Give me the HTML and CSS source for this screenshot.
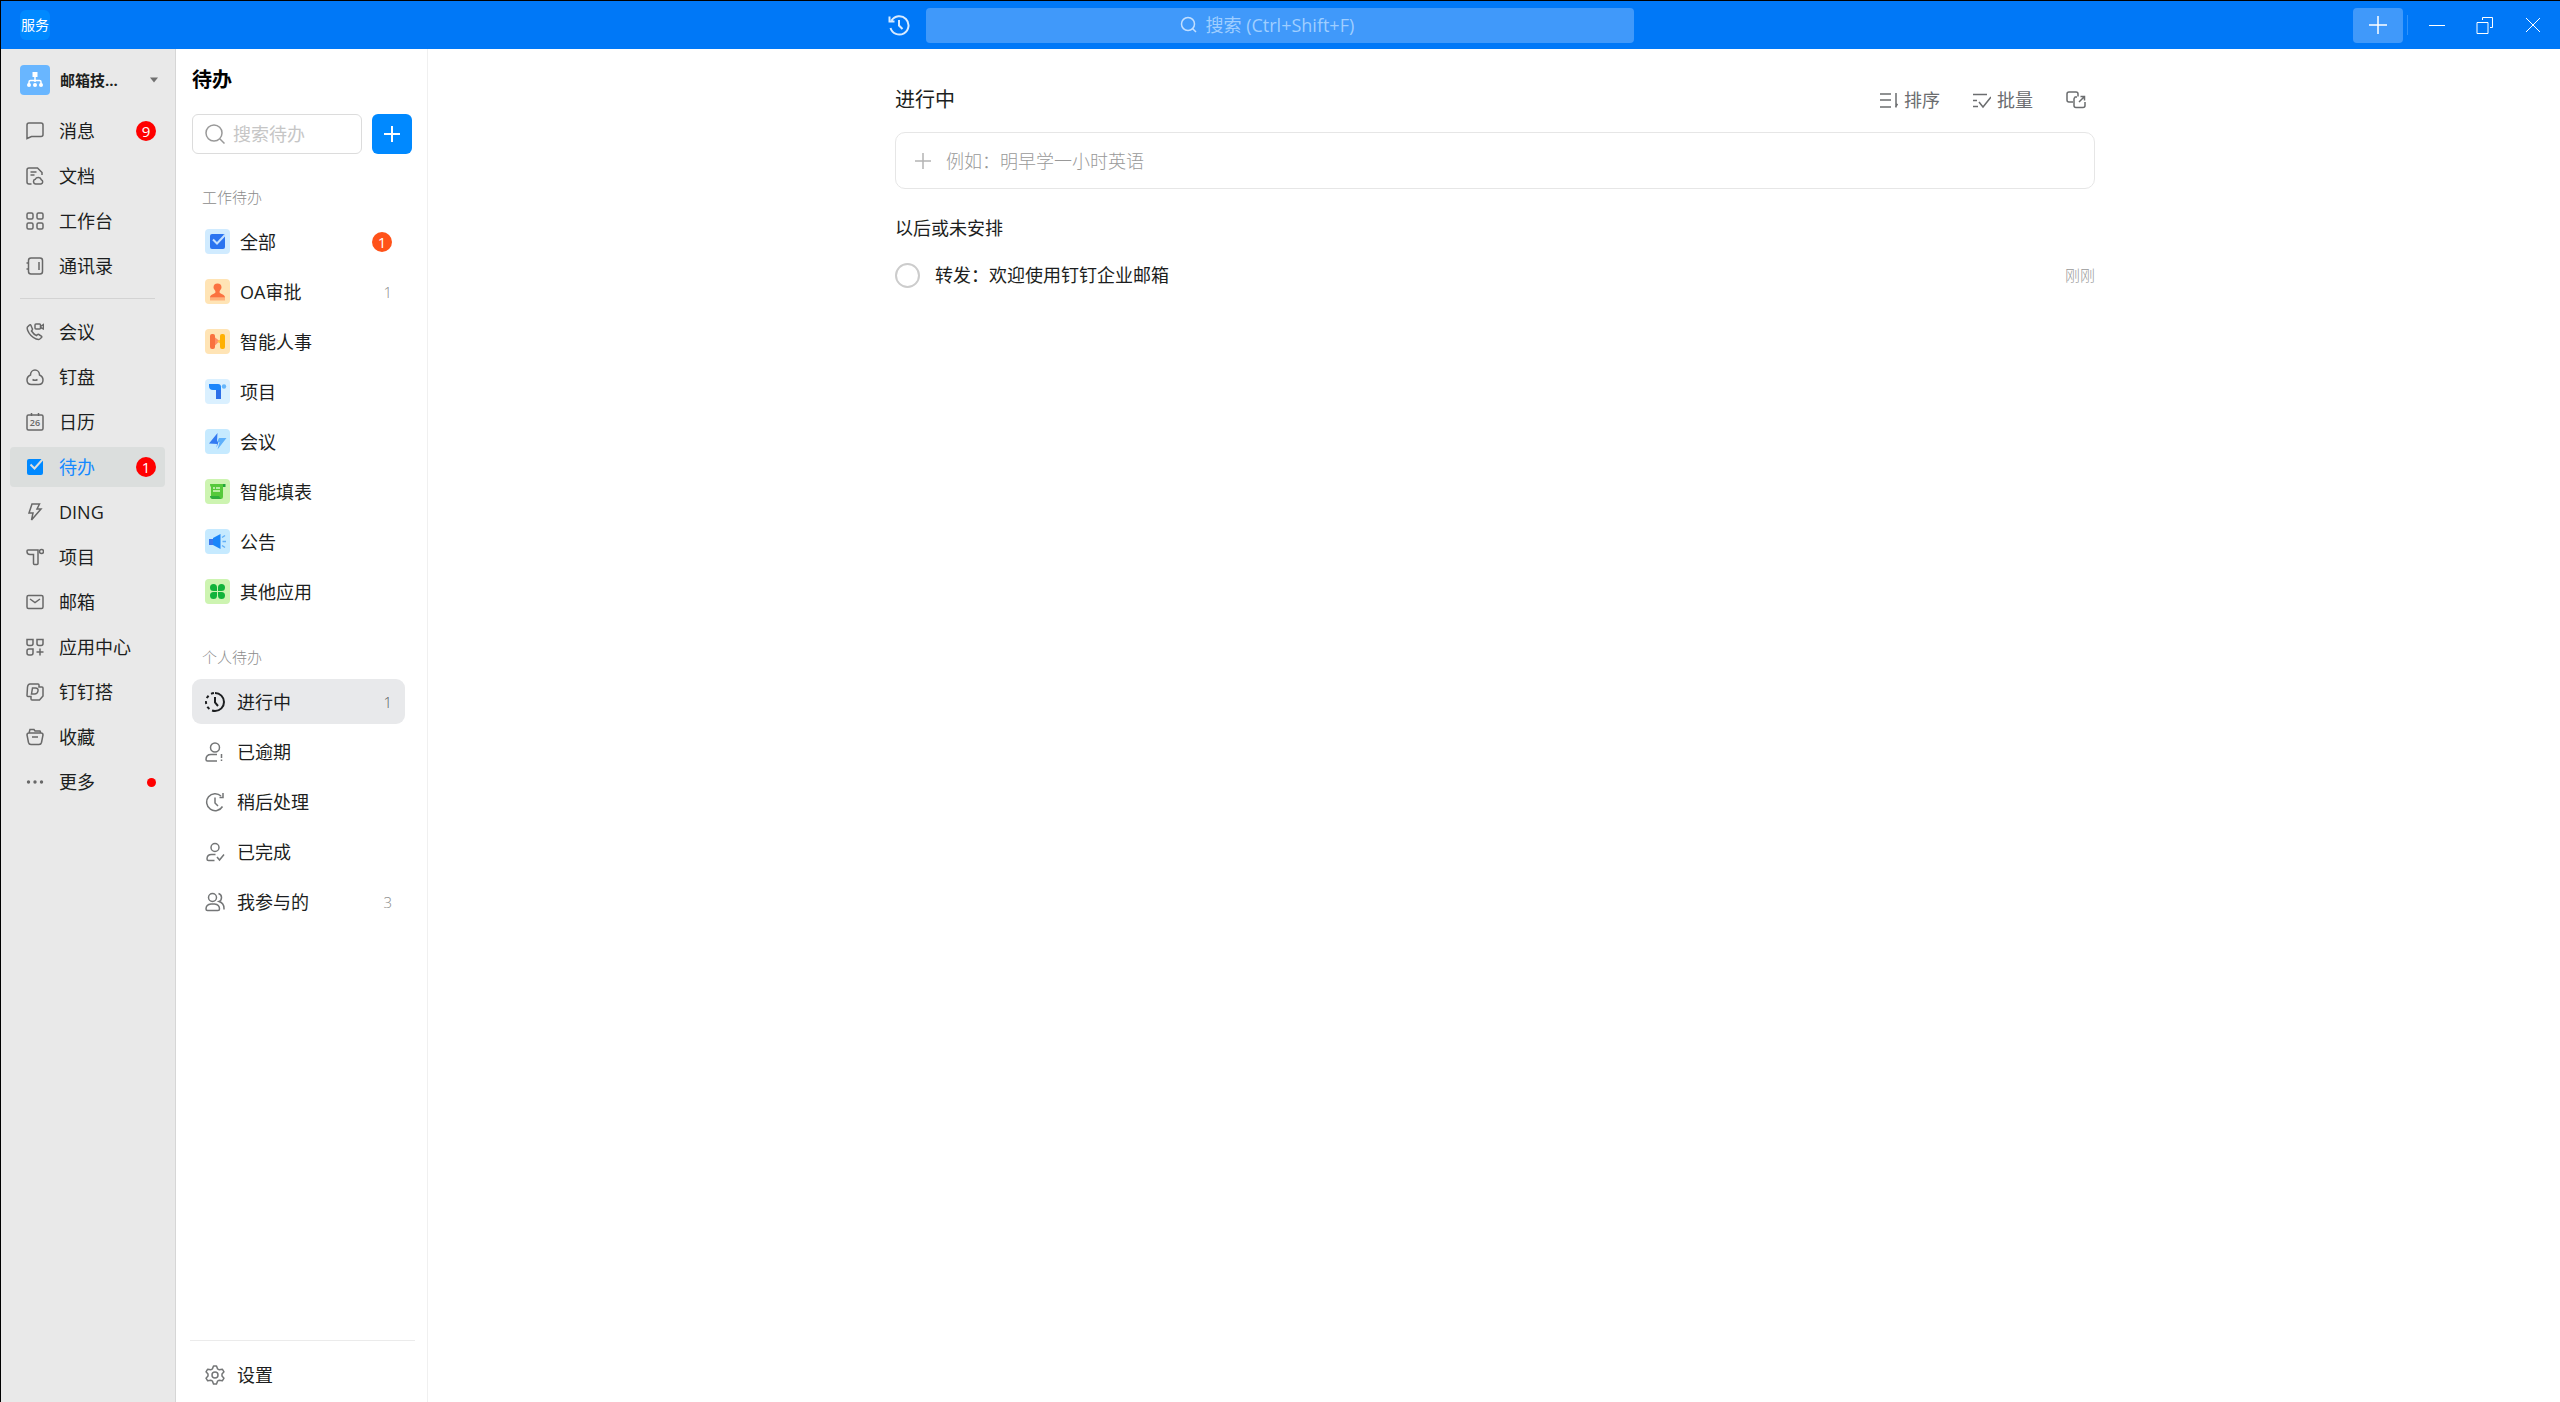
FILE: index.html
```html
<!DOCTYPE html>
<html lang="zh-CN">
<head>
<meta charset="utf-8">
<title>待办</title>
<link rel="stylesheet" href="styles.css">
</head>
<body>
<div class="app">
  <header class="topbar">
    <div class="topbar-side"><span class="user">服务</span></div>
    <div class="topbar-center">
      <button class="icon-button history" aria-label="历史">
        <svg class="icon-22" viewBox="0 0 22 22"><path d="M3.500 6.500A9.200 9.200 0 1 1 2.500 14M1.500 2.500v5h5M11 6v5.500l3.500 3.500"/></svg>
      </button>
      <label class="global-search">
        <svg class="icon-18" viewBox="0 0 18 18"><circle cx="8" cy="8" r="6.500"/><path d="M12.500 12.500L16 16"/></svg>
        <input type="search" aria-label="搜索" placeholder="搜索 (Ctrl+Shift+F)">
      </label>
    </div>
    <div class="topbar-side window-tools">
      <button class="create" aria-label="新建"><svg class="icon-18" viewBox="0 0 18 18"><path d="M0 9h18M9 0v18"/></svg></button>
      <span class="split"></span>
      <button class="icon-button" aria-label="最小化"><svg class="icon-18" viewBox="0 0 18 18"><path d="M1 9.500h16"/></svg></button>
      <button class="icon-button" aria-label="还原"><svg class="icon-18" viewBox="0 0 18 18"><path d="M1 6.500h11v11H1zM6.500 4V1.500h10v10H14"/></svg></button>
      <button class="icon-button" aria-label="关闭"><svg class="icon-18" viewBox="0 0 18 18"><path d="M2 2l14 14M16 2L2 16"/></svg></button>
    </div>
  </header>

  <div class="body">
    <nav class="sidebar" aria-label="主导航">
      <button class="org">
        <span class="org-logo"><svg class="icon-18" viewBox="0 0 18 18"><path class="solid" d="M6.500 1h5v5h-5z"/><path d="M9 6v5M3 13.500V11q0-1.500 1.500-1.500h9Q15 9.500 15 11v2.500"/><circle class="solid" cx="3" cy="14" r="2"/><circle class="solid" cx="9" cy="14" r="2"/><circle class="solid" cx="15" cy="14" r="2"/></svg></span>
        <span class="org-name">邮箱技...</span>
        <svg class="caret" viewBox="0 0 10 6"><path d="M0 0h10L5 6z"/></svg>
      </button>
      <ul class="nav-list">
        <li><a class="nav-item" href="#"><svg class="icon-18" viewBox="0 0 18 18"><path d="M1 16.500V3a2 2 0 0 1 2-2h12a2 2 0 0 1 2 2v9.500a2 2 0 0 1-2 2H5.500z"/></svg><span>消息</span><b class="badge">9</b></a></li>
        <li><a class="nav-item" href="#"><svg class="icon-18" viewBox="0 0 18 18"><path d="M5.500 17H3a2 2 0 0 1-2-2V3a2 2 0 0 1 2-2h8.500L16 5.500V8M4.500 5h6M4.500 8h4M9.500 17H15a2.200 2.200 0 0 0 .3-4.200 3.200 3.200 0 0 0-6-.5A2.400 2.400 0 0 0 9.500 17z"/></svg><span>文档</span></a></li>
        <li><a class="nav-item" href="#"><svg class="icon-18" viewBox="0 0 18 18"><rect x="1" y="1" width="6" height="6" rx="1.500"/><rect x="11" y="1" width="6" height="6" rx="1.500"/><rect x="1" y="11" width="6" height="6" rx="1.500"/><rect x="11" y="11" width="6" height="6" rx="1.500"/></svg><span>工作台</span></a></li>
        <li><a class="nav-item" href="#"><svg class="icon-18" viewBox="0 0 18 18"><rect x="2.500" y="1" width="14" height="16" rx="2.500"/><path d="M13 5v8M.5 6h2M.5 12h2"/></svg><span>通讯录</span></a></li>
      </ul>
      <ul class="nav-list nav-more">
        <li><a class="nav-item" href="#"><svg class="icon-18" viewBox="0 0 18 18"><path d="M3.500 2L1.500 4c-.8 1 0 5 3.500 8.500S12.500 17 13.800 16l1.700-1.500c.5-.5.3-1-.2-1.400l-2.500-1.600c-.6-.3-1-.2-1.500.3l-.8.8C8.500 12 6.500 9.500 5.500 8l.7-1c.4-.5.4-.9 0-1.500L4.900 2.300C4.500 1.600 4 1.500 3.500 2z"/><rect x="9" y="1" width="5.500" height="5" rx="1"/><path d="M14.500 3.500l3-2v4.500l-3-1.500"/></svg><span>会议</span></a></li>
        <li><a class="nav-item" href="#"><svg class="icon-18" viewBox="0 0 18 18"><path d="M4.500 7a4.500 5 0 0 1 9 0C16 8 17 10 17 12c0 3-2 4.500-4.500 4.500h-7C3 16.500 1 15 1 12c0-2 1-4 3.500-5zM6.500 11.500q2.500 1.500 5 0"/></svg><span>钉盘</span></a></li>
        <li><a class="nav-item" href="#"><svg class="icon-18 calendar" viewBox="0 0 18 18"><rect x="1" y="2" width="16" height="15" rx="1.500"/><path d="M5.500 0v3M12.500 0v3"/><text x="9" y="13">26</text></svg><span>日历</span></a></li>
        <li><a class="nav-item current" href="#" aria-current="page"><svg class="icon-18" viewBox="0 0 18 18"><rect class="solid" x="1" y="1" width="16" height="16" rx="2"/><path class="knock" d="M4.500 6.500l4 4L17 1"/></svg><span>待办</span><b class="badge">1</b></a></li>
        <li><a class="nav-item" href="#"><svg class="icon-18" viewBox="0 0 18 18"><path d="M6 1h7.500L11 6h4L5.500 17 7 10H3z"/></svg><span>DING</span></a></li>
        <li><a class="nav-item" href="#"><svg class="icon-18" viewBox="0 0 18 18"><path d="M2 2h10v13.500q0 1-1 1H8.500q-1 0-1-1V6.500H4Q1 6.500 1 3.500V3q0-1 1-1z"/><circle cx="15.500" cy="3.500" r="2"/></svg><span>项目</span></a></li>
        <li><a class="nav-item" href="#"><svg class="icon-18" viewBox="0 0 18 18"><rect x="1" y="2.500" width="16" height="13" rx="1.500"/><path d="M4 6l5 3.500L14 6"/></svg><span>邮箱</span></a></li>
        <li><a class="nav-item" href="#"><svg class="icon-18" viewBox="0 0 18 18"><path d="M1 1.500h6v4q0 2-2 2H3q-2 0-2-2zM11 1.500h6v4q0 2-2 2h-2q-2 0-2-2zM1 13q0-2 2-2h4v4q0 2-2 2H3q-2 0-2-2zM14 10.500v7M10.500 14h7"/></svg><span>应用中心</span></a></li>
        <li><a class="nav-item" href="#"><svg class="icon-18" viewBox="0 0 18 18"><path d="M4 1h8q1 0 1 1v2h3q1 0 1 1v8l-3.500 4H6q-1 0-1-1v-2.500H2q-1 0-1-1L1.500 4Q2 1 4 1zM5.500 11L6.500 5h3q3 0 2.500 3t-3.500 3z"/></svg><span>钉钉搭</span></a></li>
        <li><a class="nav-item" href="#"><svg class="icon-18" viewBox="0 0 18 18"><path d="M3 5L4 1.500h4l1 1.500h5l1 2M3 5h12q2 0 2 2l-1.500 7.500q-.5 2-2.500 2H5q-2 0-2.500-2L1 7q0-2 2-2zM6 9h6"/></svg><span>收藏</span></a></li>
        <li><a class="nav-item" href="#"><svg class="icon-18" viewBox="0 0 18 18"><circle class="solid" cx="2.500" cy="9" r="1.700"/><circle class="solid" cx="9" cy="9" r="1.700"/><circle class="solid" cx="15.500" cy="9" r="1.700"/></svg><span>更多</span><i class="dot"></i></a></li>
      </ul>
    </nav>

    <aside class="panel">
      <h1 class="panel-title">待办</h1>
      <div class="panel-tools">
        <label class="panel-search">
          <svg class="icon-20" viewBox="0 0 20 20"><circle cx="9" cy="9" r="8"/><path d="M15 15l4.500 4.500"/></svg>
          <input type="search" aria-label="搜索待办" placeholder="搜索待办">
        </label>
        <button class="add" aria-label="新建待办"><svg class="icon-18" viewBox="0 0 18 18"><path d="M1 9h16M9 1v16"/></svg></button>
      </div>

      <h2 class="group-title">工作待办</h2>
      <ul class="list work">
        <li><a class="row" href="#"><svg class="app-icon" viewBox="0 0 25 25"><rect width="25" height="25" rx="4" fill="#d0ebff"/><rect x="5" y="5" width="15" height="15" rx="2" fill="#2b74f0"/><path d="M8 10.500l4 4 8-8.500" fill="none" stroke="#c3e1ff" stroke-width="2"/></svg><span>全部</span><b class="badge orange">1</b></a></li>
        <li><a class="row" href="#"><svg class="app-icon" viewBox="0 0 25 25"><rect width="25" height="25" rx="4" fill="#ffe4b5"/><path d="M5 18.500h15v3H5z" fill="#ffb27a"/><path d="M8.500 8.500a4 4 0 1 1 8 0c0 2-2 2.500-2 4.500 0 2 5.500 2 5.500 5.500H5C5 15 10.500 15 10.500 13c0-2-2-2.500-2-4.500z" fill="#fb7240"/></svg><span>OA审批</span><em class="count">1</em></a></li>
        <li><a class="row" href="#"><svg class="app-icon" viewBox="0 0 25 25"><rect width="25" height="25" rx="4" fill="#ffe4b5"/><path d="M9.500 8l5 4-5 5z" fill="#ff8f66"/><rect x="5" y="5" width="5" height="15" rx="2" fill="#f9713e"/><path d="M12 12.500l4-2.500v5z" fill="#ffc14a"/><rect x="15" y="5" width="5" height="15" rx="2" fill="#ffb001"/></svg><span>智能人事</span></a></li>
        <li><a class="row" href="#"><svg class="app-icon" viewBox="0 0 25 25"><rect width="25" height="25" rx="4" fill="#daf0ff"/><path d="M4 5h9q3 0 3 3v12h-5v-9H8Q4 11 4 7z" fill="#1b86fb"/><path d="M11 11h5v9h-5z" fill="#2e6fe8"/><circle cx="19" cy="7.500" r="2.200" fill="#66b6fb"/></svg><span>项目</span></a></li>
        <li><a class="row" href="#"><svg class="app-icon" viewBox="0 0 25 25"><rect width="25" height="25" rx="4" fill="#c6eaff"/><path d="M12.500 4l-.5 8 1.500 1-2 5.500.5-3.500-8-.5z" fill="#347bf2"/><path d="M14 9h7.500L12.500 20.500l2-7.500H12z" fill="#5eb0fb"/></svg><span>会议</span></a></li>
        <li><a class="row" href="#"><svg class="app-icon" viewBox="0 0 25 25"><rect width="25" height="25" rx="4" fill="#cdf4b1"/><path d="M5 5h13v13q0 2-2 2H8q-2 0-2-3V8Q5 8 5 5z" fill="#56c93b"/><path d="M5 17h9l2 3H8q-3 0-3-3z" fill="#2fae3c"/><path d="M18 5h2.500v3H18z" fill="#23a83b"/><path d="M8 9h2M11 9h4M8 12h7" stroke="#d8f7c4"/></svg><span>智能填表</span></a></li>
        <li><a class="row" href="#"><svg class="app-icon" viewBox="0 0 25 25"><rect width="25" height="25" rx="4" fill="#c6eaff"/><path d="M4 10h4v6H4z" fill="#3b78ee"/><path d="M8 9l7.500-4v15L8 16z" fill="#1a86fa"/><path d="M17 8.500l3-2M17.500 12.500H21M17 16.500l3 2" stroke="#62b0f8" stroke-width="1.500"/></svg><span>公告</span></a></li>
        <li><a class="row" href="#"><svg class="app-icon" viewBox="0 0 25 25"><rect width="25" height="25" rx="4" fill="#cdf4b1"/><g fill="#12b33b"><path d="M12 12H8.500A3.500 3.500 0 1 1 12 8.500zM13 12V8.500a3.500 3.500 0 1 1 3.500 3.500zM12 13v3.500A3.500 3.500 0 1 1 8.500 13zM13 13h3.500a3.500 3.500 0 1 1-3.500 3.500z"/></g></svg><span>其他应用</span></a></li>
      </ul>

      <h2 class="group-title">个人待办</h2>
      <ul class="list personal">
        <li><a class="row current" href="#" aria-current="true"><svg class="icon-20" viewBox="0 0 20 20"><path d="M10 1a9 9 0 0 1 0 18"/><path stroke-dasharray="3 3" d="M10 19a9 9 0 0 1 0-18"/><path d="M10 5v5.500l3 3.500"/></svg><span>进行中</span><em class="count">1</em></a></li>
        <li><a class="row" href="#"><svg class="icon-20" viewBox="0 0 20 20"><circle cx="10" cy="5.500" r="4.500"/><path d="M12 19H2.500q-1.500 0-1.500-1.500c0-3 2-5 5-5h6M16.500 12v4M16.500 17.500V19"/></svg><span>已逾期</span></a></li>
        <li><a class="row" href="#"><svg class="icon-20" viewBox="0 0 20 20"><path d="M17.500 14.500A8.500 8.500 0 1 1 16 4M18 1v4.500h-3.500M10 5.500v5.500l3 3"/></svg><span>稍后处理</span></a></li>
        <li><a class="row" href="#"><svg class="icon-20" viewBox="0 0 20 20"><circle cx="10" cy="5.500" r="4"/><path d="M9.500 18.500H3.500Q2 18.500 2 17c0-3 2-4.500 4.500-4.500h4M12 15l2.500 3 4.500-5.500"/></svg><span>已完成</span></a></li>
        <li><a class="row" href="#"><svg class="icon-20" viewBox="0 0 20 20"><circle cx="7.500" cy="5.500" r="4"/><path d="M6 12h3.500q5 .5 5 5 0 1.500-1.500 1.500H2.500Q1 18.500 1 17q0-4.500 5-5zM13.500 1.500q3 1 3 4t-2.500 4q5 1.500 5 7v1"/></svg><span>我参与的</span><em class="count">3</em></a></li>
      </ul>

      <div class="panel-foot">
        <a class="row" href="#"><svg class="icon-20" viewBox="0 0 20 20"><path stroke-linejoin="round" d="M8.500 1h3l1 2.800 1.800 1 3-.6 1.700 2.600-2 2.200v2l2 2.200-1.700 2.600-3-.6-1.800 1-1 2.800h-3l-1-2.800-1.800-1-3 .6L1 13.200 3 11V9L1 6.800l1.700-2.600 3 .6 1.800-1z"/><circle cx="10" cy="10" r="3"/></svg><span>设置</span></a>
      </div>
    </aside>

    <main class="main">
      <div class="content">
        <div class="content-head">
          <h2 class="content-title">进行中</h2>
          <div class="actions">
            <button class="action"><svg class="icon-18" viewBox="0 0 18 18"><path d="M0 3h11M0 9h11M0 16h11M16 2v14.500M15.500 16l2-3"/></svg>排序</button>
            <button class="action"><svg class="icon-18" viewBox="0 0 18 18"><path d="M0 3.500h14M0 9.500h4M0 15.500h5M6 11l4 5 8-10"/></svg>批量</button>
            <button class="action" aria-label="独立窗口"><svg class="icon-20" viewBox="0 0 20 20"><path d="M7 12H3q-2 0-2-2V4q0-2 2-2h7q2 0 2 2v2.500M8.500 7H11M9 7.500q-1 .5-1 1.500v6.500q0 2 2 2h7q2 0 2-2V12M13 12l5.500-5.500M14.500 6.500h4v4"/></svg></button>
          </div>
        </div>
        <label class="new-task">
          <svg class="icon-18" viewBox="0 0 18 18"><path d="M1 9h16M9 1v16"/></svg>
          <input type="text" aria-label="新建待办" placeholder="例如：明早学一小时英语">
        </label>
        <h3 class="section-title">以后或未安排</h3>
        <ul class="tasks">
          <li class="task"><input type="checkbox" id="task-1"><label for="task-1">转发：欢迎使用钉钉企业邮箱</label><time>刚刚</time></li>
        </ul>
      </div>
    </main>
  </div>
</div>
</body>
</html>
```
FILE: styles.css
```css
* { box-sizing: border-box; }
body {
  margin: 0;
  font: 400 18px/24px "Open Sans", "Noto Sans CJK SC", sans-serif;
  color: #1c1e20;
  background: #fff;
}
ul { list-style: none; margin: 0; padding: 0; }
a { color: inherit; text-decoration: none; }
h1, h2, h3 { margin: 0; font-weight: 400; }
em, i { font-style: normal; }
button, input { font: inherit; color: inherit; margin: 0; padding: 0; border: 0; background: none; }
input { outline: 0; min-width: 0; }
input[type="search"] { appearance: none; }
svg { flex: none; display: block; fill: none; stroke: currentColor; stroke-width: 1.5; }
.solid { fill: currentColor; stroke: none; }
.icon-18 { width: 18px; height: 18px; }
.icon-20 { width: 20px; height: 20px; }
.icon-22 { width: 22px; height: 22px; }

.app {
  display: flex;
  flex-direction: column;
  min-height: 100vh;
  border-top: 1px solid #000;
  border-left: 1px solid #000;
}

/* Title bar */
.topbar {
  display: grid;
  grid-template-columns: 1fr auto 1fr;
  align-items: center;
  height: 48px;
  color: #fff;
  background: #0078f7;
}
.topbar-side { padding-left: 19px; }
.user {
  display: block;
  width: 30px;
  border-radius: 6px;
  background: #0089ff;
  font-size: 14px;
  line-height: 30px;
  text-align: center;
  white-space: nowrap;
}
.topbar-center { display: flex; align-items: center; gap: 16px; margin-left: -40px; }
.history { color: #d8ebff; }
.history svg { stroke-width: 2; }
.global-search {
  display: flex;
  align-items: center;
  justify-content: center;
  gap: 8px;
  width: 708px;
  height: 35px;
  border-radius: 4px;
  background: #4099fa;
  color: #c2dfff;
}
.global-search input { width: 174px; }
.global-search input::placeholder { color: #9fceff; opacity: 1; }
.icon-button { display: flex; }
.window-tools {
  display: flex;
  align-items: center;
  justify-content: flex-end;
  gap: 30px;
  padding-right: 18px;
}
.create {
  display: grid;
  place-items: center;
  width: 50px;
  height: 35px;
  margin-right: -26px;
  border-radius: 4px;
  background: #4099fa;
}
.split { width: 1px; height: 20px; margin-right: -10px; background: #2e92fb; }
.window-tools .icon-button svg { stroke-width: 1; }

.body { display: flex; flex: 1; }

/* Main navigation */
.sidebar {
  flex: none;
  width: 175px;
  padding: 16px 10px 16px 9px;
  border-right: 1px solid #d6d6d6;
  background: #e9e9e9;
}
.org {
  display: flex;
  align-items: center;
  width: 100%;
  padding: 0 7px 0 10px;
  margin-bottom: 16px;
}
.org-logo {
  display: grid;
  place-items: center;
  width: 30px;
  height: 30px;
  margin-right: 10px;
  border-radius: 4px;
  background: #69b6ff;
  color: #fff;
}
.org-name { font-size: 15px; font-weight: 700; line-height: 30px; }
.caret { width: 8px; height: 6px; margin-left: auto; fill: #707070; stroke: none; }
.nav-list { display: grid; gap: 5px; }
.nav-more { position: relative; margin-top: 26px; }
.nav-more::before {
  content: "";
  position: absolute;
  top: -14px;
  left: 10px;
  right: 10px;
  border-top: 1px solid #d3d3d3;
}
.nav-item {
  display: flex;
  align-items: center;
  height: 40px;
  padding: 0 9px 0 16px;
  gap: 15px;
  border-radius: 4px;
}
.nav-item svg { color: #686868; }
.nav-item.current { background: #dbdedd; color: #1689ff; }
.nav-item.current svg { color: #0089ff; }
.knock { stroke: #dbdedd; stroke-width: 2; }
.calendar text { font: 600 9px "Open Sans", sans-serif; text-anchor: middle; fill: currentColor; stroke: none; }
.badge {
  width: 20px;
  height: 20px;
  margin-left: auto;
  border-radius: 10px;
  background: #f00;
  color: #fff;
  font-size: 15px;
  font-weight: 400;
  line-height: 20px;
  text-align: center;
}
.badge.orange { background: #ff5219; }
.dot { width: 9px; height: 9px; margin-left: auto; border-radius: 5px; background: #f00; }

/* To-do panel */
.panel {
  display: flex;
  flex-direction: column;
  flex: none;
  width: 252px;
  padding: 16px 0 0 16px;
  border-right: 1px solid #f0f0f0;
}
.panel-title { margin-bottom: 19px; font-size: 20px; font-weight: 700; line-height: 30px; color: #000; }
.panel-tools { display: flex; gap: 10px; margin-bottom: 31px; padding-right: 15px; }
.panel-search {
  display: flex;
  align-items: center;
  flex: 1;
  gap: 8px;
  height: 40px;
  padding: 0 12px;
  border: 1px solid #dcdcdc;
  border-radius: 6px;
  color: #999;
}
.panel-search input { flex: 1; width: 100%; }
.panel-search input::placeholder { color: #c6c6c6; opacity: 1; }
.add {
  display: grid;
  place-items: center;
  width: 40px;
  border-radius: 6px;
  background: #0089ff;
  color: #fff;
}
.add svg { stroke-width: 2; }
.group-title { padding: 0 10px; margin-bottom: 10px; font-size: 15px; font-weight: 300; color: #8c8c8c; }
.list { display: grid; gap: 5px; padding-right: 22px; }
.work { margin-bottom: 31px; }
.row {
  display: flex;
  align-items: center;
  height: 45px;
  padding: 0 13px;
  gap: 12px;
  border-radius: 9px;
}
.row .icon-20 { color: #747677; }
.work .row { gap: 10px; }
.app-icon { width: 25px; height: 25px; stroke: none; }
.row.current { background: #e8e9eb; }
.row.current .icon-20 { color: #1c1e20; stroke-width: 2; }
.row.current .count { color: #5a5d60; }
.count { margin-left: auto; font-size: 15px; font-weight: 300; color: #8c8c8c; }
.panel-foot {
  margin: auto 12px 0 -2px;
  padding: 11px 0 5px 2px;
  border-top: 1px solid #ebebeb;
}

/* Task list */
.main { flex: 1; min-width: 0; padding: 36px 40px 40px 42px; }
.content { max-width: 1200px; margin: 0 auto; }
.content-head { display: flex; align-items: center; justify-content: space-between; height: 30px; margin-bottom: 17px; }
.content-title { font-size: 20px; }
.actions { display: flex; gap: 33px; padding-right: 9px; }
.action { display: flex; align-items: center; gap: 6px; color: #6b6d6f; }
.new-task {
  display: flex;
  align-items: center;
  gap: 14px;
  height: 57px;
  padding: 0 18px;
  border: 1px solid #e6e6e6;
  border-radius: 10px;
  color: #b4b4b4;
}
.new-task input { flex: 1; color: #1c1e20; }
.new-task input::placeholder { font-weight: 300; color: #999; opacity: 1; }
.section-title { margin: 27px 0 20px; font-size: 18px; }
.task { display: flex; align-items: center; height: 30px; }
.task input {
  appearance: none;
  width: 25px;
  height: 25px;
  margin-right: 15px;
  border: 2px solid #ccc;
  border-radius: 50%;
}
.task input:checked { border-color: #0089ff; background: #0089ff; }
.task time { margin-left: auto; font-size: 15px; font-weight: 300; color: #999; }
```
